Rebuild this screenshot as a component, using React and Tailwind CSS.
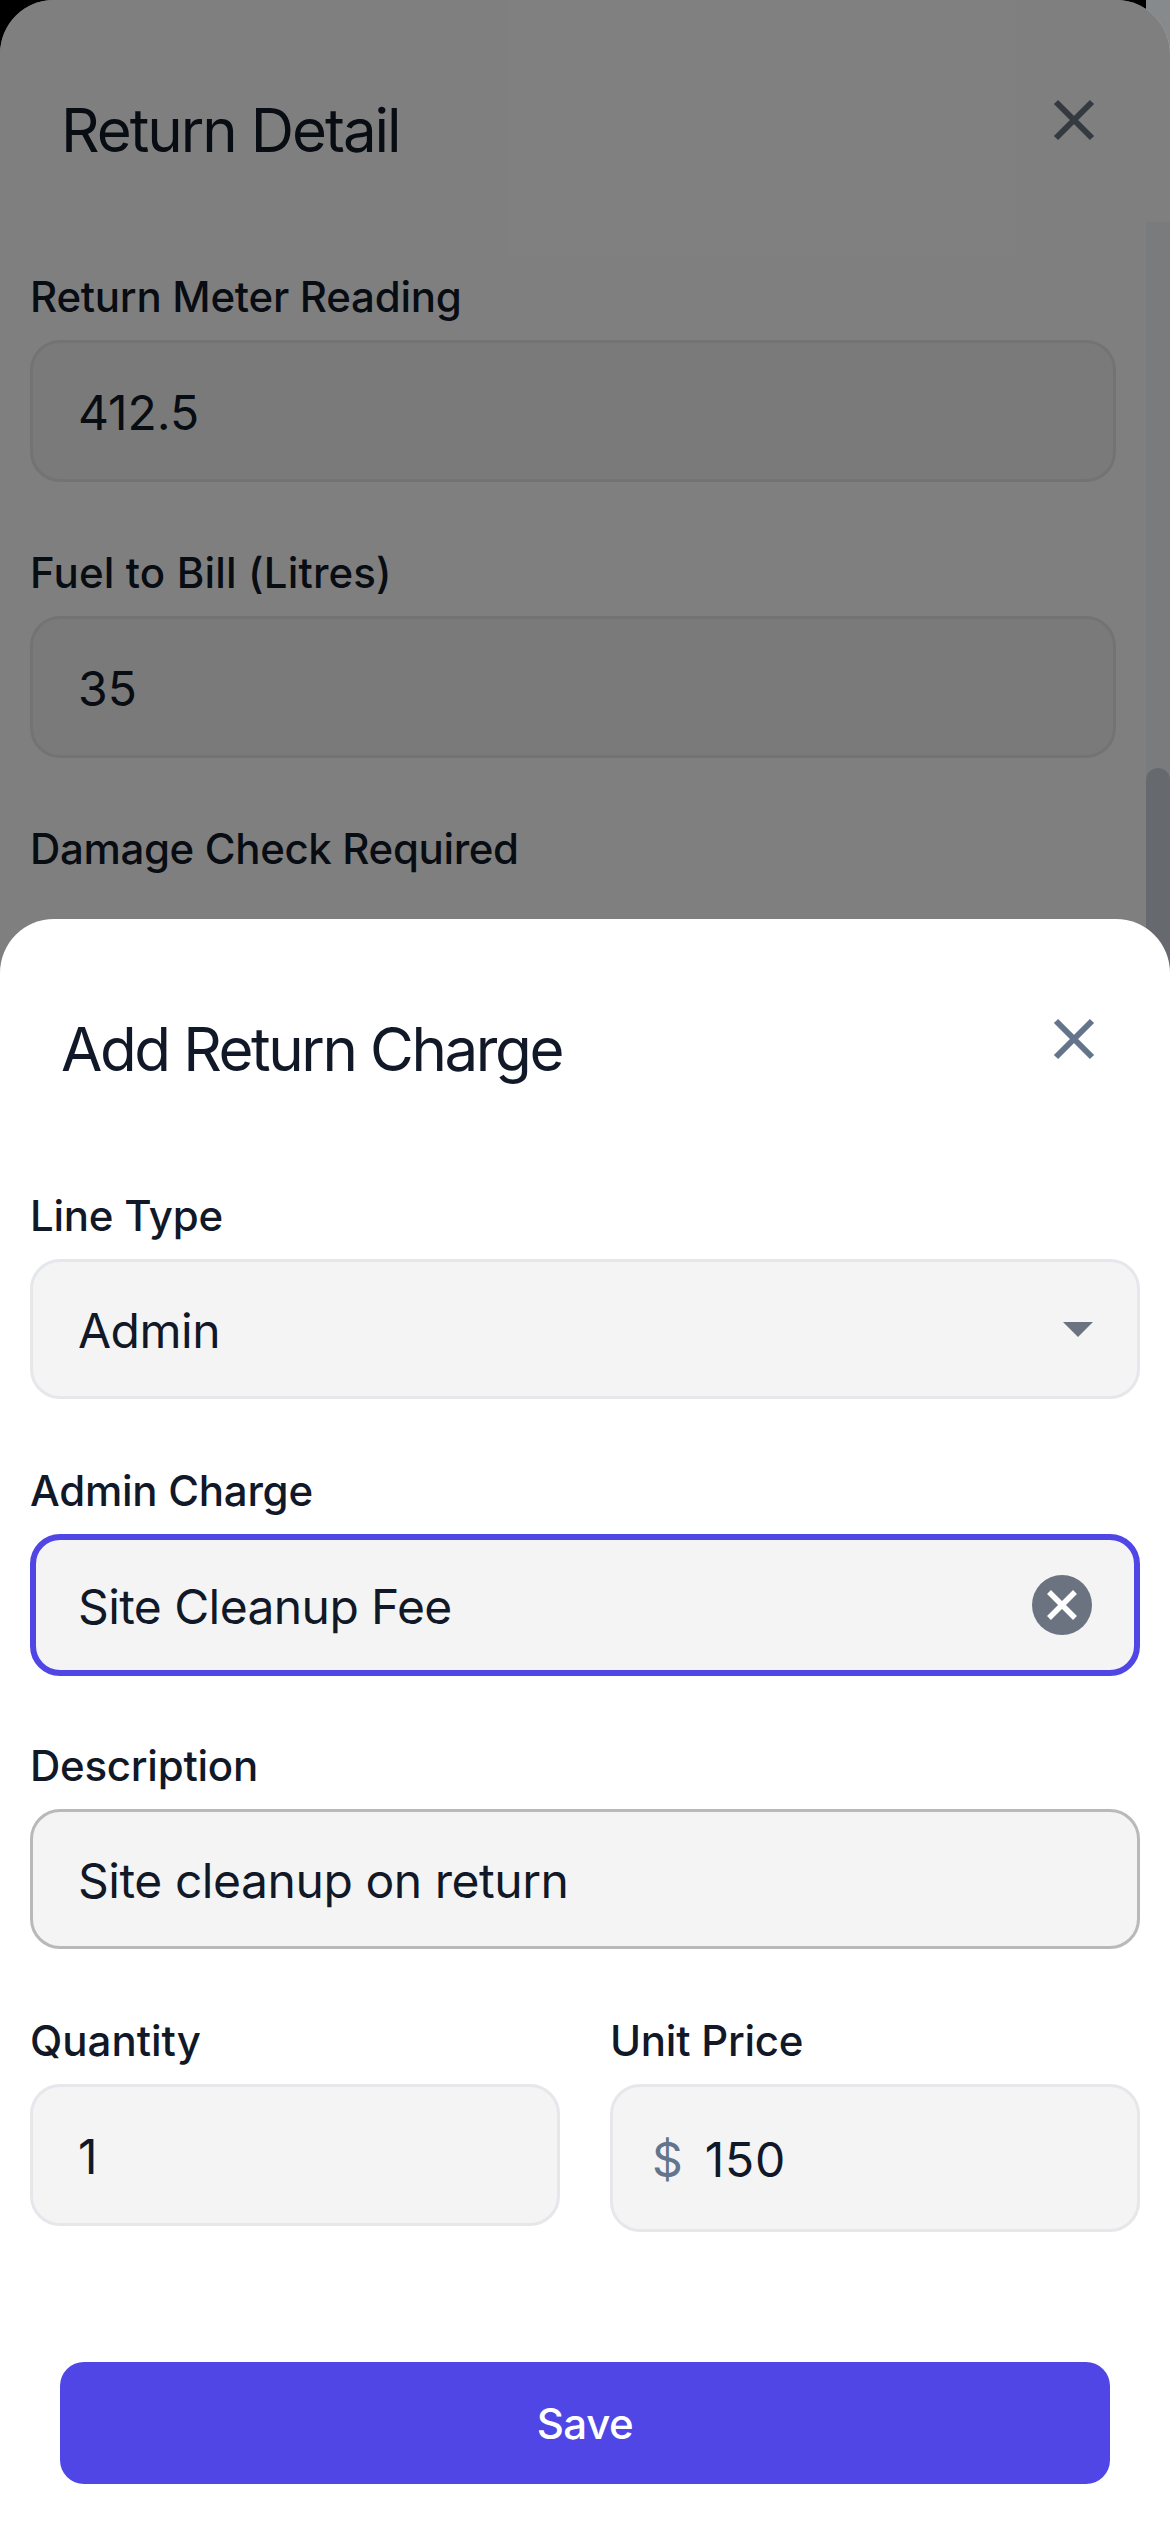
import React from "react";

const font = { fontFamily: "Inter, sans-serif" };

function CloseIcon({ className }) {
  return (
    <svg viewBox="0 0 42 42" className={className} fill="none" stroke="currentColor" strokeWidth="6">
      <path d="M3 3l36 36M39 3L3 39" />
    </svg>
  );
}

function Header({ title, iconColor, titleClass = "tracking-[-2px]" }) {
  return (
    <div className="flex w-[1146px] h-[265px] items-start justify-between pl-[61px] pr-[51px]">
      <h2 className={`mt-[88px] text-[60px] leading-[84px] font-normal text-[#111827] ${titleClass}`}>{title}</h2>
      <button className={`mt-[99px] ${iconColor}`}>
        <CloseIcon className="w-[42px] h-[42px]" />
      </button>
    </div>
  );
}

function Field({ label, className = "", labelClass = "tracking-[-0.25px]", children }) {
  return (
    <div className={className}>
      <label className={`block h-[63px] mb-[12px] text-[42px] leading-[63px] font-[470] text-[#111827] ${labelClass}`}>{label}</label>
      {children}
    </div>
  );
}

function Box({ className = "", children }) {
  return (
    <div className={`flex items-center rounded-[30px] bg-[#f4f4f5] pl-[45px] pr-[44px] text-[48px] leading-[72px] font-[430] text-[#111827] ${className}`}>
      {children}
    </div>
  );
}

// values sit a little under the box's centre
function Value({ className = "", children }) {
  return <span className={`pt-[4px] ${className}`}>{children}</span>;
}

export default function App() {
  return (
    <div style={font} className="relative h-[2532px] w-[1170px] overflow-hidden bg-black">
      {/* Strip showing behind the back sheet's top right corner */}
      <div className="absolute right-0 top-0 h-[222px] w-[24px] bg-[#878a8d]" />

      {/* Return Detail sheet */}
      <div className="absolute inset-0 rounded-t-[54px] bg-white">
        <Header title="Return Detail" iconColor="text-[#6b7280]" />
        <div className="flex w-[1146px] flex-col gap-[60px] pl-[30px] pr-[30px]">
          <Field label="Return Meter Reading">
            <Box className="h-[142px] border-[3px] border-[#e5e7eb]">
              <Value>412.5</Value>
            </Box>
          </Field>
          <Field label="Fuel to Bill (Litres)" labelClass="tracking-[0.15px]" className="-mt-[1px]">
            <Box className="h-[142px] border-[3px] border-[#e5e7eb]">
              <Value>35</Value>
            </Box>
          </Field>
          <Field label="Damage Check Required" labelClass="tracking-[-0.35px]" className="-mt-[1px]" />
        </div>

        {/* Scrollbar */}
        <div className="absolute right-0 top-[222px] bottom-0 w-[24px] bg-[#f5f6f8]">
          <div className="mt-[546px] h-[400px] rounded-full bg-[#cdd3dc]" />
        </div>

        {/* Dim layer */}
        <div className="absolute inset-0 rounded-t-[54px] bg-black/50" />
      </div>

      {/* Add Return Charge sheet */}
      <div className="absolute inset-x-0 bottom-0 h-[1613px] rounded-t-[54px] bg-white">
        <Header title="Add Return Charge" titleClass="tracking-[-2.4px]" iconColor="text-[#64748b]" />
        <div className="flex flex-col gap-[60px] px-[30px]">
          <Field label="Line Type">
            <Box className="h-[140px] justify-between border-[3px] border-[#e5e7eb]">
              <Value className="tracking-[-0.5px]">Admin</Value>
              <svg viewBox="0 0 30 15" className="w-[30px] h-[15px] fill-[#6b7280]">
                <path d="M0 0h30L15 15z" />
              </svg>
            </Box>
          </Field>
          <Field label="Admin Charge">
            <Box className="h-[142px] -mb-[2px] justify-between border-[6px] border-[#4f46e5] !pl-[42px] !pr-[42px]">
              <Value className="tracking-[-0.6px]">Site Cleanup Fee</Value>
              <span className="flex h-[60px] w-[60px] items-center justify-center rounded-full bg-[#6b7280] text-white">
                <svg viewBox="0 0 30 30" className="w-[30px] h-[30px]" fill="none" stroke="currentColor" strokeWidth="5.5">
                  <path d="M2 2l26 26M28 2L2 28" />
                </svg>
              </span>
            </Box>
          </Field>
          <Field label="Description">
            <Box className="h-[140px] border-[3px] border-[#b9b9b9]">
              <Value className="tracking-[-0.45px]">Site cleanup on return</Value>
            </Box>
          </Field>
          <div className="flex items-start gap-[50px]">
            <Field label="Quantity" labelClass="tracking-normal" className="w-[530px]">
              <Box className="h-[142px] border-[3px] border-[#e5e7eb]">
                <Value>1</Value>
              </Box>
            </Field>
            <Field label="Unit Price" className="w-[530px]">
              <Box className="h-[148px] gap-[22px] border-[3px] border-[#e5e7eb] !pl-[39px]">
                <Value className="text-[#64748b]">$</Value>
                <Value className="tracking-[0.8px]">150</Value>
              </Box>
            </Field>
          </div>
        </div>
        <div className="mt-[130px] px-[60px]">
          <button className="h-[122px] w-full rounded-[24px] bg-[#4f46e5] text-[42px] font-[470] tracking-[-0.4px] text-white">Save</button>
        </div>
      </div>
    </div>
  );
}
